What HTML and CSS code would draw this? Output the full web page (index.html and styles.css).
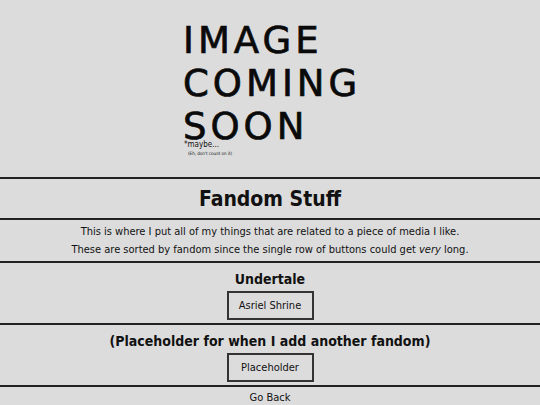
FILE: index.html
```
<!DOCTYPE html>
<html lang="en">
<head>
<meta charset="utf-8">
<title>Fandom Stuff</title>
<link rel="stylesheet" href="styles.css">
</head>
<body>
<header class="hero">
  <div class="soon">
    <div class="soon-big">IMAGE<br>COMING<br>SOON</div>
    <div class="soon-maybe">*maybe...</div>
    <div class="soon-eh">(Eh, don't count on it)</div>
  </div>
</header>
<section class="band band-title">
  <h1 class="title">Fandom Stuff</h1>
</section>
<section class="band band-intro">
  <p class="intro">This is where I put all of my things that are related to a piece of media I like.<br>These are sorted by fandom since the single row of buttons could get <em>very</em> long.</p>
</section>
<section class="band band-fandom">
  <h2 class="fandom">Undertale</h2>
  <a class="btn" href="#">Asriel Shrine</a>
</section>
<section class="band band-fandom">
  <h2 class="fandom">(Placeholder for when I add another fandom)</h2>
  <a class="btn" href="#">Placeholder</a>
</section>
<footer class="band band-back">
  <a class="back" href="#">Go Back</a>
</footer>
</body>
</html>
```
FILE: styles.css
```
html, body {
  margin: 0;
  padding: 0;
  background: #dcdcdc;
  color: #111;
  font-family: "DejaVu Sans Condensed", "DejaVu Sans", "Liberation Sans", sans-serif;
}
.hero {
  height: 177px;
  display: flex;
  justify-content: center;
}
.soon {
  width: 180px;
  padding-top: 19px;
  padding-left: 3px;
  box-sizing: border-box;
}
.soon-big {
  font-family: "DejaVu Sans", sans-serif;
  font-size: 37px;
  line-height: 43px;
  letter-spacing: 4px;
  color: #0a0a0a;
  -webkit-text-stroke: 0.7px #0a0a0a;
}
.soon-maybe {
  font-size: 8px;
  line-height: 8px;
  margin-top: -7px;
  padding-left: 1px;
}
.soon-eh {
  font-size: 4.5px;
  line-height: 6px;
  margin-top: 2px;
  padding-left: 5px;
}
.band {
  border-top: 2px solid #222;
  display: flex;
  flex-direction: column;
  align-items: center;
  box-sizing: border-box;
}
.band-title {
  height: 41px;
  justify-content: center;
}
.title {
  margin: 0;
  font-size: 21px;
  font-weight: bold;
}
.band-intro {
  height: 43px;
  justify-content: center;
}
.intro {
  margin: 0;
  font-size: 11px;
  line-height: 18px;
  text-align: center;
}
.band-fandom {
  height: 62px;
  padding-top: 6px;
}
.fandom {
  margin: 0;
  font-size: 14px;
  line-height: 20px;
  font-weight: bold;
}
.btn {
  margin-top: 2px;
  width: 87px;
  height: 29px;
  box-sizing: border-box;
  border: 2px solid #333;
  display: flex;
  align-items: center;
  justify-content: center;
  font-size: 11px;
  color: #111;
  text-decoration: none;
}
.band-back {
  height: 20px;
  padding-top: 4px;
}
.back {
  font-size: 11px;
  color: #111;
  text-decoration: none;
}
```
